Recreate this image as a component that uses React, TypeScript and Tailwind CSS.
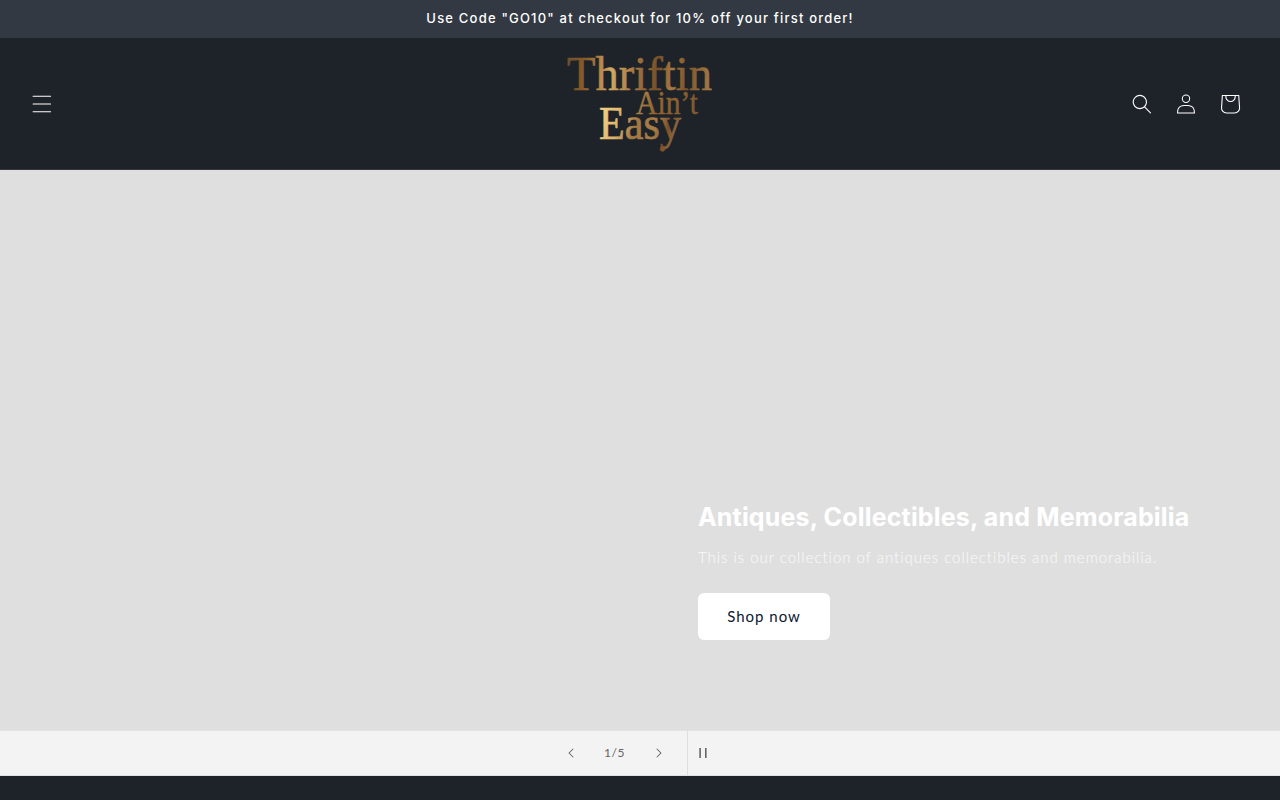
import type { ReactNode } from "react";

function IconButton({ label, children }: { label: string; children: ReactNode }) {
  return (
    <button aria-label={label} className="flex h-11 w-11 items-center justify-center text-white">
      {children}
    </button>
  );
}

function Caret({ className }: { className: string }) {
  return (
    <svg viewBox="0 0 10 6" fill="currentColor" className={className}>
      <path
        fillRule="evenodd"
        clipRule="evenodd"
        d="M9.354.646a.5.5 0 00-.708 0L5 4.293 1.354.646a.5.5 0 00-.708.708l4 4a.5.5 0 00.708 0l4-4a.5.5 0 000-.708z"
      />
    </svg>
  );
}

function Logo() {
  return (
    <svg
      viewBox="0 -10 150 130"
      className="h-[130px] w-[150px]"
      fontFamily="'Liberation Serif', serif"
      role="img"
      aria-label="Thriftin Ain't Easy"
    >
      <defs>
        <linearGradient id="goldTop" gradientUnits="userSpaceOnUse" x1="3" y1="20" x2="147" y2="32">
          <stop offset="0" stopColor="#6f5030" />
          <stop offset="0.12" stopColor="#8a5c29" />
          <stop offset="0.3" stopColor="#d2a966" />
          <stop offset="0.45" stopColor="#a87a43" />
          <stop offset="0.62" stopColor="#765029" />
          <stop offset="0.72" stopColor="#a87a43" />
          <stop offset="0.82" stopColor="#7c5429" />
          <stop offset="1" stopColor="#a67b48" />
        </linearGradient>
        <linearGradient id="goldMid" gradientUnits="userSpaceOnUse" x1="72" y1="45" x2="134" y2="65">
          <stop offset="0" stopColor="#b38a50" />
          <stop offset="0.3" stopColor="#94672f" />
          <stop offset="1" stopColor="#80582e" />
        </linearGradient>
        <linearGradient id="goldLow" gradientUnits="userSpaceOnUse" x1="35" y1="70" x2="110" y2="95">
          <stop offset="0" stopColor="#f2cf83" />
          <stop offset="0.25" stopColor="#d9b26b" />
          <stop offset="0.45" stopColor="#a37743" />
          <stop offset="0.7" stopColor="#a87e46" />
          <stop offset="0.85" stopColor="#7c5127" />
          <stop offset="1" stopColor="#927049" />
        </linearGradient>
      </defs>
      <g fill="url(#goldTop)" stroke="url(#goldTop)" strokeWidth="0.6">
        <text x="2" y="40.5" fontSize="49" textLength="145" lengthAdjust="spacingAndGlyphs">
          Thriftin
        </text>
      </g>
      <g fill="url(#goldMid)" stroke="url(#goldMid)" strokeWidth="0.4">
        <text x="71" y="64.500" fontSize="33" textLength="62" lengthAdjust="spacingAndGlyphs">
          Ain’t
        </text>
      </g>
      <g fill="url(#goldLow)" stroke="url(#goldLow)" strokeWidth="0.7">
        <text x="34" y="90" fontSize="46" textLength="82" lengthAdjust="spacingAndGlyphs">
          Easy
        </text>
        <circle cx="97.500" cy="100" r="2.300" />
      </g>
    </svg>
  );
}

function Header() {
  return (
    <header className="grid h-[132px] grid-cols-[1fr_auto_1fr] items-center border-b border-[#34383e] bg-[#1e2229] px-5">
      <IconButton label="Menu">
        <svg viewBox="0 0 18 16" fill="currentColor" className="h-5 w-5">
          <path d="M1 .5a.5.5 0 100 1h15.71a.5.5 0 000-1H1zM.5 8a.5.5 0 01.5-.5h15.71a.5.5 0 010 1H1A.5.5 0 01.5 8zm0 7a.5.5 0 01.5-.5h15.71a.5.5 0 010 1H1a.5.5 0 01-.5-.5z" />
        </svg>
      </IconButton>
      <Logo />
      <div className="flex justify-end pr-2">
        <IconButton label="Search">
          <svg viewBox="0 0 18 19" fill="currentColor" className="h-5 w-5">
            <path
              fillRule="evenodd"
              clipRule="evenodd"
              d="M11.03 11.68A5.784 5.784 0 112.85 3.5a5.784 5.784 0 018.18 8.18zm.26 1.12a6.78 6.78 0 11.72-.7l5.4 5.4a.5.5 0 11-.71.7l-5.41-5.4z"
            />
          </svg>
        </IconButton>
        <IconButton label="Log in">
          <svg viewBox="0 0 18 19" fill="currentColor" className="h-5 w-5">
            <path
              fillRule="evenodd"
              clipRule="evenodd"
              d="M6 4.5a3 3 0 116 0 3 3 0 01-6 0zm3-4a4 4 0 100 8 4 4 0 000-8zm5.58 12.15c1.12.82 1.83 2.24 1.91 4.85H1.51c.08-2.6.79-4.03 1.9-4.85C4.66 11.75 6.5 11.5 9 11.5s4.35.26 5.58 1.15zM9 10.5c-2.5 0-4.65.24-6.17 1.35C1.27 12.98.5 14.93.5 18v.5h17V18c0-3.07-.77-5.02-2.33-6.15-1.52-1.1-3.67-1.35-6.17-1.35z"
            />
          </svg>
        </IconButton>
        <IconButton label="Cart">
          <svg viewBox="0 0 40 40" fill="currentColor" className="h-11 w-11">
            <path
              fillRule="evenodd"
              d="M15.75 11.8h-3.16l-.77 11.6a5 5 0 0 0 4.99 5.34h7.38a5 5 0 0 0 4.99-5.33L28.4 11.8zm0 1h-2.22l-.71 10.67a4 4 0 0 0 3.99 4.27h7.38a4 4 0 0 0 4-4.27l-.72-10.67h-2.22v.63a4.75 4.75 0 1 1-9.5 0zm8.5 0h-7.5v.63a3.75 3.75 0 1 0 7.5 0z"
            />
          </svg>
        </IconButton>
      </div>
    </header>
  );
}

export default function App() {
  return (
    <div className="h-screen w-full overflow-hidden bg-[#1e2229]">
      {/* Announcement bar */}
      <div className="flex h-[38px] items-center justify-center bg-[#333942] pb-[2px]">
        <p className="whitespace-nowrap font-['Inter',sans-serif] text-[13px] leading-none font-medium tracking-[1.2px] text-white">
          Use Code "GO10" at checkout for 10% off your first order!
        </p>
      </div>

      <Header />

      {/* Slideshow */}
      <section className="flex h-[560px] items-end justify-end bg-[#dfdfdf] pb-[90px]">
        <div className="w-[582px]">
          <h2 className="whitespace-nowrap font-['Inter',sans-serif] text-[25px] leading-[34px] font-bold tracking-[0.17px] text-white">
            Antiques, Collectibles, and Memorabilia
          </h2>
          <p className="mt-[10px] whitespace-nowrap font-['Lato',sans-serif] text-[15px] leading-[27px] font-light tracking-[0.98px] text-white/85">
            This is our collection of antiques collectibles and memorabilia.
          </p>
          <button className="mt-[22px] flex h-[47px] w-[132px] items-center justify-center rounded-md bg-white font-['Lato',sans-serif] text-[15px] tracking-[1px] text-[#0b1730]">
            Shop now
          </button>
        </div>
      </section>

      {/* Slider controls */}
      <div className="flex h-[46px] justify-center border-y border-[#e1e1e1] bg-[#f3f3f3] pr-[13px] text-[#666]">
        <div className="flex items-center">
          <button aria-label="Previous slide" className="flex h-11 w-11 items-center justify-center">
            <Caret className="h-[6px] w-[10px] rotate-90" />
          </button>
          <span className="w-11 text-center font-['Lato',sans-serif] text-xs tracking-[0.5px]">1/5</span>
          <button aria-label="Next slide" className="flex h-11 w-11 items-center justify-center">
            <Caret className="h-[6px] w-[10px] -rotate-90" />
          </button>
        </div>
        <button
          aria-label="Pause slideshow"
          className="ml-[6px] flex w-8 items-center justify-center border-l border-[#dedede]"
        >
          <svg viewBox="0 0 8 10" fill="currentColor" className="h-[10px] w-2">
            <path d="M.3 0h1.600v10H.3zM6 0h1.600v10H6z" />
          </svg>
        </button>
      </div>
    </div>
  );
}
